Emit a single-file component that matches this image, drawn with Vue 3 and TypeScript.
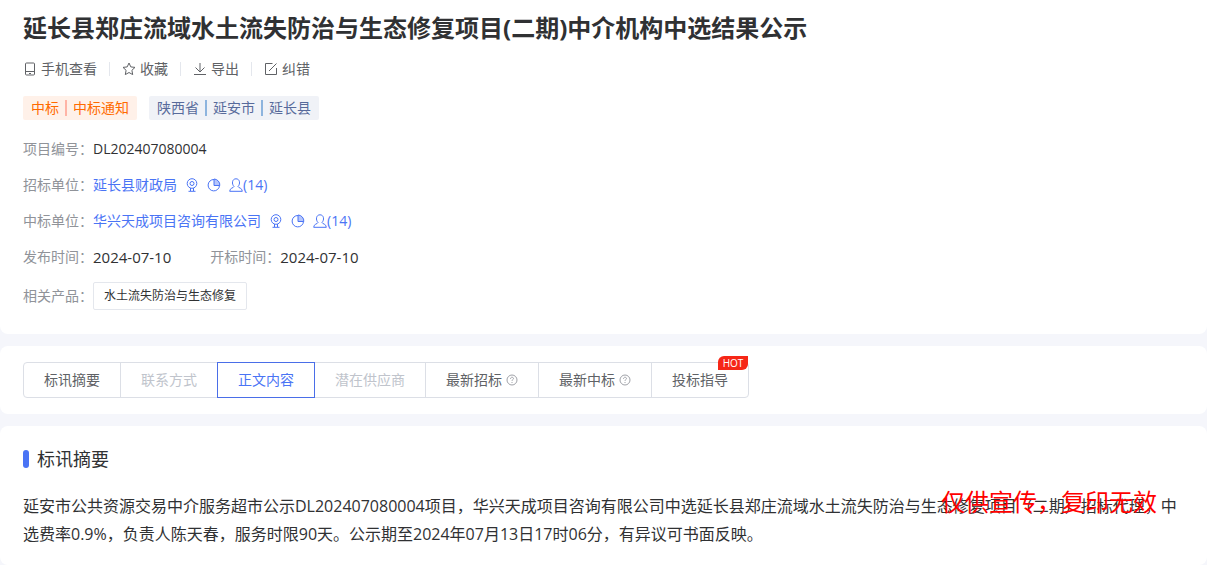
<script setup lang="ts">
interface Tab {
  label: string
  state?: 'active' | 'disabled'
  help?: boolean
  hot?: boolean
}

const tabs: Tab[] = [
  { label: '标讯摘要' },
  { label: '联系方式', state: 'disabled' },
  { label: '正文内容', state: 'active' },
  { label: '潜在供应商', state: 'disabled' },
  { label: '最新招标', help: true },
  { label: '最新中标', help: true },
  { label: '投标指导', hot: true },
]

const companies = [
  { label: '招标单位：', name: '延长县财政局', contacts: 14 },
  { label: '中标单位：', name: '华兴天成项目咨询有限公司', contacts: 14 },
]
</script>

<template>
  <main class="page">
    <section class="card head">
      <h1>延长县郑庄流域水土流失防治与生态修复项目(二期)中介机构中选结果公示</h1>

      <div class="actions">
        <button type="button">
          <svg viewBox="0 0 14 14"><rect x="2.5" y="1" width="9" height="12" rx="1" /><path d="M2.500 9.500h9M6 11.500h2" /></svg>手机查看
        </button>
        <button type="button">
          <svg viewBox="0 0 14 14"><path d="M7 1l1.8 3.900 4.200.5-3.100 2.900.8 4.300L7 10.500l-3.700 2.100.8-4.300L1 5.400l4.200-.5z" /></svg>收藏
        </button>
        <button type="button">
          <svg viewBox="0 0 14 14"><path d="M7 1v9M2.500 5.500L7 10l4.500-4.500M1 12.500h12" /></svg>导出
        </button>
        <button type="button">
          <svg viewBox="0 0 14 14"><path d="M8.500 1.500h-7v11h11V6M5 9l7.500-7.500" /></svg>纠错
        </button>
      </div>

      <div class="tags">
        <span class="tag orange"><span>中标</span><i></i><span>中标通知</span></span>
        <span class="tag region"><span>陕西省</span><i></i><span>延安市</span><i></i><span>延长县</span></span>
      </div>

      <dl class="info">
        <div class="row">
          <dt>项目编号：</dt>
          <dd>DL202407080004</dd>
        </div>
        <div v-for="c in companies" :key="c.label" class="row">
          <dt>{{ c.label }}</dt>
          <dd class="company">
            <a href="#">{{ c.name }}</a>
            <a href="#" aria-label="位置">
              <svg viewBox="0 0 14 14"><circle cx="7" cy="5.500" r="4.800" /><circle cx="7" cy="5.500" r="2" /><path d="M5.500 10v3M8.500 10v3M3.500 13.300h7" /></svg>
            </a>
            <a href="#" aria-label="统计">
              <svg viewBox="0 0 14 14"><path d="M7 1.500A5.700 5.700 0 1 0 12.500 7.500" /><path class="slice" d="M7 1v6.500h5.800A6 6 0 0 0 7 1z" /></svg>
            </a>
            <a href="#" class="contacts">
              <svg viewBox="0 0 14 14"><path d="M5 8.500C2.500 6 3 .8 7 .8s4.500 5.200 2 7.700c.3 1.500 4.300 1.300 4.300 4.800H.7C.7 9.800 4.700 10 5 8.500" /></svg>({{ c.contacts }})
            </a>
          </dd>
        </div>
        <div class="row">
          <dt>发布时间：</dt>
          <dd class="date">2024-07-10</dd>
          <dt class="second">开标时间：</dt>
          <dd class="date">2024-07-10</dd>
        </div>
        <div class="row">
          <dt>相关产品：</dt>
          <dd><a class="product" href="#">水土流失防治与生态修复</a></dd>
        </div>
      </dl>
    </section>

    <nav class="card tabs-card">
      <div class="tabs">
        <button
          v-for="t in tabs"
          :key="t.label"
          type="button"
          :class="t.state"
          :disabled="t.state === 'disabled'"
        >
          {{ t.label }}
          <svg v-if="t.help" class="help" viewBox="0 0 12 12"><circle cx="6" cy="6" r="5" /><path d="M4.500 4.800c0-2 3-2 3-.2 0 1-1.500 1-1.500 2.200M6 8v1" /></svg>
          <span v-if="t.hot" class="hot">HOT</span>
        </button>
      </div>
    </nav>

    <section class="card summary">
      <h2>标讯摘要</h2>
      <div class="body">
        <p>延安市公共资源交易中介服务超市公示DL202407080004项目，华兴天成项目咨询有限公司中选延长县郑庄流域水土流失防治与生态修复项目（二期）招标代理，中选费率0.9%，负责人陈天春，服务时限90天。公示期至2024年07月13日17时06分，有异议可书面反映。</p>
        <span class="stamp">仅供宣传，复印无效</span>
      </div>
    </section>
  </main>
</template>

<style>
body {
  background: #f5f6fb;
}
</style>

<style scoped>
.page {
  display: flex;
  flex-direction: column;
  gap: 12px;
  min-height: 100vh;
  font-family: "Open Sans", "Noto Sans CJK SC", sans-serif;
  font-size: 14px;
  line-height: 20px;
  color: #303133;
}
.card {
  background: #fff;
  border-radius: 8px;
  padding: 0 23px;
}
.head {
  border-top-left-radius: 0;
  border-top-right-radius: 0;
  padding-top: 12px;
  padding-bottom: 24px;
}
h1, h2, p, dl, dd {
  margin: 0;
}
h1 {
  font-size: 24px;
  line-height: 32px;
}
button {
  font: inherit;
  color: #606266;
  background: none;
  border: 0;
  padding: 0;
  cursor: pointer;
}
a {
  color: #4a74f5;
  text-decoration: none;
}
svg {
  flex: none;
  width: 14px;
  height: 14px;
  fill: none;
  stroke: currentColor;
  stroke-width: 1;
}
.actions {
  display: flex;
  margin-top: 15px;
}
.actions button {
  display: flex;
  align-items: center;
  gap: 4px;
}
.actions button + button::before {
  content: "";
  width: 1px;
  height: 14px;
  margin: 0 8px 0 12px;
  background: #e4e7ed;
}
.tags {
  display: flex;
  gap: 12px;
  margin-top: 17px;
}
.tag {
  display: flex;
  align-items: center;
  height: 24px;
  padding: 0 8px;
  border-radius: 2px;
}
.tag i {
  width: 2px;
  height: 16px;
  margin: 0 6px;
}
.orange {
  color: #ff6a00;
  background: #fff1e9;
}
.orange i {
  background: #ffb4a6;
}
.region {
  color: #576a9b;
  background: #f0f2f7;
}
.region i {
  background: #8db4de;
}
.info {
  display: flex;
  flex-direction: column;
  gap: 16px;
  margin-top: 19px;
}
.row {
  display: flex;
  align-items: center;
}
.row:last-child {
  margin-top: -1px;
}
dt {
  width: 70px;
  color: #909399;
}
.company {
  display: flex;
  align-items: center;
  gap: 8px;
}
.company a {
  display: flex;
  align-items: center;
}
.slice {
  fill: #b5c5fb;
}
.date {
  font-size: 15px;
}
.second {
  margin-left: 39px;
}
.product {
  display: block;
  padding: 3px 10px;
  border: 1px solid #e4e7ed;
  border-radius: 2px;
  font-size: 12px;
  color: #303133;
}
.tabs-card {
  padding-top: 16px;
  padding-bottom: 16px;
}
.tabs {
  display: flex;
}
.tabs button {
  position: relative;
  display: flex;
  align-items: center;
  gap: 4px;
  height: 36px;
  padding: 0 20px;
  border: 1px solid #dcdfe6;
}
.tabs button + button {
  margin-left: -1px;
}
.tabs button:first-child {
  border-radius: 4px 0 0 4px;
}
.tabs button:last-child {
  border-radius: 0 4px 4px 0;
}
.tabs .active {
  z-index: 1;
  color: #4a74f5;
  border-color: #4a6ee8;
}
.tabs .disabled {
  color: #c0c4cc;
  cursor: default;
}
.help {
  width: 12px;
  height: 12px;
  color: #a0a2a8;
}
.hot {
  position: absolute;
  top: -7px;
  right: 0;
  width: 30px;
  border-radius: 6px 0 6px 0;
  background: #f62717;
  color: #fff;
  font-size: 10px;
  line-height: 14px;
}
.summary {
  flex: 1;
  padding-top: 19px;
}
h2 {
  display: flex;
  align-items: center;
  gap: 8px;
  font-size: 18px;
  font-weight: 400;
  line-height: 28px;
}
h2::before {
  content: "";
  width: 6px;
  height: 18px;
  border-radius: 3px;
  background: #4a74f5;
}
.body {
  position: relative;
  margin-top: 19px;
}
p {
  font-size: 16px;
  line-height: 28px;
}
.stamp {
  position: absolute;
  top: -6px;
  right: 27px;
  color: #f00;
  font-size: 24px;
  line-height: 32px;
}
</style>
